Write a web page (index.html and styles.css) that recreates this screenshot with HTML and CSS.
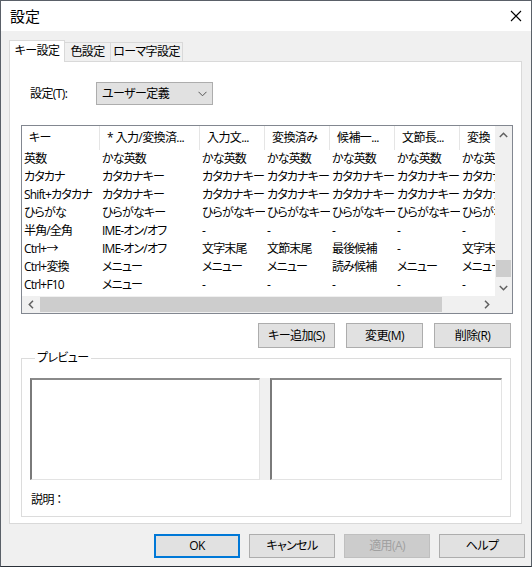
FILE: index.html
```html
<!DOCTYPE html>
<html lang="ja">
<head>
<meta charset="utf-8">
<title>設定</title>
<link rel="stylesheet" href="styles.css">
</head>
<body>
<div class="window">
  <div class="titlebar">
    <span class="title">設定</span>
    <svg class="close" width="12" height="12" viewBox="0 0 12 12"><path d="M1 1L11 11M11 1L1 11" stroke="#000" stroke-width="1.1" fill="none"/></svg>
  </div>
  <div class="client">
    <div class="tabs">
      <div class="tab sel">キー設定</div>
      <div class="tab t2">色設定</div>
      <div class="tab t3">ローマ字設定</div>
    </div>
    <div class="panel">
      <div class="setrow">
        <span class="setlabel">設定(T):</span>
        <div class="combo">
          <span>ユーザー定義</span>
          <svg width="9" height="6" viewBox="0 0 9 6"><path d="M0.5 0.8L4.5 4.8L8.5 0.8" stroke="#555" stroke-width="1" fill="none"/></svg>
        </div>
      </div>
      <div class="list">
        <div class="view">
          <div class="grid hdr">
            <div>キー</div><div>* 入力/変換済...</div><div>入力文...</div><div>変換済み</div><div>候補一...</div><div>文節長...</div><div>変換</div>
          </div>
          <div class="grid row"><div>英数</div><div>かな英数</div><div>かな英数</div><div>かな英数</div><div>かな英数</div><div>かな英数</div><div>かな英数</div></div>
          <div class="grid row"><div>カタカナ</div><div>カタカナキー</div><div>カタカナキー</div><div>カタカナキー</div><div>カタカナキー</div><div>カタカナキー</div><div>カタカナキー</div></div>
          <div class="grid row"><div>Shift+カタカナ</div><div>カタカナキー</div><div>カタカナキー</div><div>カタカナキー</div><div>カタカナキー</div><div>カタカナキー</div><div>カタカナキー</div></div>
          <div class="grid row"><div>ひらがな</div><div>ひらがなキー</div><div>ひらがなキー</div><div>ひらがなキー</div><div>ひらがなキー</div><div>ひらがなキー</div><div>ひらがなキー</div></div>
          <div class="grid row"><div>半角/全角</div><div>IME-オン/オフ</div><div>-</div><div>-</div><div>-</div><div>-</div><div>-</div></div>
          <div class="grid row"><div>Ctrl+→</div><div>IME-オン/オフ</div><div>文字末尾</div><div>文節末尾</div><div>最後候補</div><div>-</div><div>文字末尾</div></div>
          <div class="grid row"><div>Ctrl+変換</div><div>メニュー</div><div>メニュー</div><div>メニュー</div><div>読み候補</div><div>メニュー</div><div>メニュー</div></div>
          <div class="grid row"><div>Ctrl+F10</div><div>メニュー</div><div>-</div><div>-</div><div>-</div><div>-</div><div>-</div></div>
        </div>
        <div class="vscroll">
          <div class="arrow"><svg width="9" height="6" viewBox="0 0 9 6"><path d="M0.8 5L4.5 1.3L8.2 5" stroke="#606060" stroke-width="1.5" fill="none"/></svg></div>
          <div class="vtrack"><div class="vthumb"></div></div>
          <div class="arrow"><svg width="9" height="6" viewBox="0 0 9 6"><path d="M0.8 1L4.5 4.7L8.2 1" stroke="#606060" stroke-width="1.5" fill="none"/></svg></div>
        </div>
        <div class="hscroll">
          <div class="arrow"><svg width="6" height="9" viewBox="0 0 6 9"><path d="M5 0.8L1.3 4.5L5 8.2" stroke="#606060" stroke-width="1.5" fill="none"/></svg></div>
          <div class="htrack"><div class="hthumb"></div></div>
          <div class="arrow"><svg width="6" height="9" viewBox="0 0 6 9"><path d="M1 0.8L4.7 4.5L1 8.2" stroke="#606060" stroke-width="1.5" fill="none"/></svg></div>
        </div>
        <div class="corner"></div>
      </div>
      <div class="btnrow">
        <button class="btn">キー追加(S)</button>
        <button class="btn">変更(M)</button>
        <button class="btn">削除(R)</button>
      </div>
      <fieldset class="group">
        <legend>プレビュー</legend>
        <div class="previews">
          <div class="pbox"></div>
          <div class="split"></div>
          <div class="pbox wide"></div>
        </div>
        <div class="desc">説明 ：</div>
      </fieldset>
    </div>
    <div class="footer">
      <button class="btn big ok">OK</button>
      <button class="btn big">キャンセル</button>
      <button class="btn big dis">適用(A)</button>
      <button class="btn big">ヘルプ</button>
    </div>
  </div>
</div>
</body>
</html>
```
FILE: styles.css
```css
html, body {
  margin: 0;
  padding: 0;
  background: #1c2631;
}
body {
  width: 532px;
  height: 567px;
  font-family: "Open Sans", "Noto Sans CJK JP", sans-serif;
  font-size: 12px;
  font-feature-settings: "palt";
  letter-spacing: -0.6px;
  color: #000;
}
.window {
  box-sizing: border-box;
  width: 532px;
  height: 567px;
  border: 1px solid #5a6068;
  border-bottom-color: #2a3038;
  background: #f0f0f0;
  display: flex;
  flex-direction: column;
}
.titlebar {
  height: 30px;
  background: #fff;
  display: flex;
  align-items: center;
  justify-content: space-between;
  padding: 0 9px 0 9px;
}
.title {
  font-size: 15px;
  line-height: 20px;
  letter-spacing: 0;
  margin-top: -1px;
}
.client {
  flex: 1;
  display: flex;
  flex-direction: column;
}
.tabs {
  display: flex;
  align-items: flex-end;
  height: 21px;
  margin: 9px 0 0 8px;
}
.tab {
  box-sizing: border-box;
  height: 19px;
  border: 1px solid #d9d9d9;
  border-bottom: none;
  background: #f0f0f0;
  display: flex;
  align-items: center;
  justify-content: center;
  line-height: 16px;
  margin-left: -1px;
}
.tab.sel {
  position: relative;
  z-index: 1;
  height: 22px;
  width: 56px;
  margin-left: 0;
  margin-bottom: -1px;
  background: #fff;
  padding-bottom: 1px;
}
.tab.t2 { width: 47px; }
.tab.t3 { width: 73px; }
.panel {
  box-sizing: border-box;
  width: 513px;
  height: 463px;
  margin-left: 8px;
  background: #fff;
  border: 1px solid #d9d9d9;
  display: flex;
  flex-direction: column;
}
.setrow {
  display: flex;
  align-items: center;
  margin: 20px 0 0 20px;
}
.setlabel {
  width: 66px;
  line-height: 16px;
}
.combo {
  box-sizing: border-box;
  width: 117px;
  height: 23px;
  background: #e1e1e1;
  border: 1px solid #adadad;
  display: flex;
  align-items: center;
  justify-content: space-between;
  padding: 0 5px 0 5px;
  line-height: 16px;
}
.list {
  box-sizing: border-box;
  width: 492px;
  height: 189px;
  margin: 20px 0 0 11px;
  border: 1px solid #828790;
  display: grid;
  grid-template-columns: 1fr 17px;
  grid-template-rows: 1fr 17px;
}
.view {
  overflow: hidden;
  background: #fff;
}
.grid {
  display: grid;
  grid-template-columns: 78px 100px 65px 65px 65px 65px 65px;
  width: max-content;
}
.grid > div {
  white-space: nowrap;
  overflow: hidden;
}
.hdr {
  height: 24px;
}
.hdr > div {
  box-sizing: border-box;
  border-right: 1px solid #e5e5e5;
  padding-left: 7px;
  line-height: 24px;
}
.row > div {
  line-height: 18px;
  padding-left: 2px;
  letter-spacing: -0.85px;
}
.vscroll {
  background: #f0f0f0;
  display: flex;
  flex-direction: column;
}
.arrow {
  width: 17px;
  height: 17px;
  flex: none;
  display: flex;
  align-items: center;
  justify-content: center;
}
.vtrack {
  flex: 1;
  display: flex;
  flex-direction: column;
  justify-content: flex-end;
  padding-bottom: 2px;
}
.vthumb {
  height: 17px;
  margin: 0 1px;
  background: #cdcdcd;
}
.hscroll {
  background: #f0f0f0;
  display: flex;
}
.htrack {
  flex: 1;
  display: flex;
  padding-left: 1px;
}
.hthumb {
  width: 402px;
  margin: 1px 0;
  background: #cdcdcd;
}
.corner {
  background: #f0f0f0;
}
.btnrow {
  display: flex;
  justify-content: flex-end;
  gap: 11px;
  margin: 9px 10px 0 0;
}
.btn {
  box-sizing: border-box;
  width: 77px;
  height: 25px;
  padding: 0;
  background: #e1e1e1;
  border: 1px solid #adadad;
  font: inherit;
  letter-spacing: inherit;
  color: #000;
  line-height: 16px;
}
.group {
  box-sizing: border-box;
  width: 490px;
  margin: 2px 0 0 11px;
  padding: 12px 7px 8px 8px;
  border: 1px solid #dcdcdc;
}
.group legend {
  padding: 0 2px;
  margin-left: 5px;
  line-height: 16px;
}
.previews {
  display: flex;
  height: 102px;
}
.pbox {
  box-sizing: border-box;
  width: 230px;
  border: 1px solid #e3e3e3;
  border-top: 2px solid #8a8a8a;
  border-left: 2px solid #7a7a7a;
  background: #fff;
}
.pbox.wide {
  width: 232px;
}
.split {
  width: 10px;
  background: #f0f0f0;
}
.desc {
  margin: 12px 0 0 1px;
  line-height: 16px;
}
.footer {
  display: flex;
  justify-content: flex-end;
  gap: 9px;
  margin: 10px 6px 0 0;
}
.btn.big {
  width: 86px;
  height: 24px;
}
.btn.ok {
  border: 2px solid #0078d7;
}
.btn.dis {
  background: #cccccc;
  border-color: #bfbfbf;
  color: #a0a0a0;
}
```
